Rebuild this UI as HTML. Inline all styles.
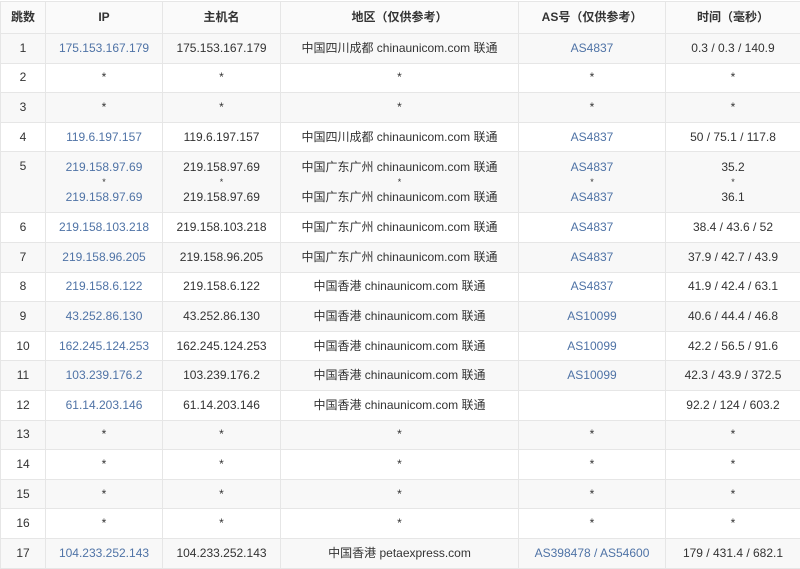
<!DOCTYPE html><html><head><meta charset="utf-8"><style>
body{margin:0;width:800px;height:568px;overflow:hidden;background:#fff;font-family:"Liberation Sans","Noto Sans CJK SC",sans-serif;font-size:12px;color:#333}
table{border-collapse:collapse;table-layout:fixed;width:800px;margin-top:1px}
td,th{border:1px solid #e6e6e6;text-align:center;padding:0;height:28.6px;line-height:15px;white-space:nowrap}
th{font-weight:bold;height:31px;background:#fafafa}
tr:nth-child(even) td{background:#f8f8f8}
tr.t td{height:61px;box-sizing:border-box}
.l{color:#4f73a6}
.s{font-size:9px;line-height:15.5px;display:block}
</style></head><body><table>
<colgroup><col style="width:45px"><col style="width:117px"><col style="width:118px"><col style="width:238px"><col style="width:147px"><col style="width:135px"></colgroup>
<tr><th>跳数</th><th>IP</th><th>主机名</th><th>地区（仅供参考）</th><th>AS号（仅供参考）</th><th>时间（毫秒）</th></tr>
<tr><td>1</td><td class="l">175.153.167.179</td><td>175.153.167.179</td><td>中国四川成都 chinaunicom.com 联通</td><td class="l">AS4837</td><td>0.3 / 0.3 / 140.9</td></tr>
<tr><td>2</td><td>*</td><td>*</td><td>*</td><td>*</td><td>*</td></tr>
<tr><td>3</td><td>*</td><td>*</td><td>*</td><td>*</td><td>*</td></tr>
<tr><td>4</td><td class="l">119.6.197.157</td><td>119.6.197.157</td><td>中国四川成都 chinaunicom.com 联通</td><td class="l">AS4837</td><td>50 / 75.1 / 117.8</td></tr>
<tr class="t"><td style="vertical-align:top;padding-top:7px">5</td><td class="l">219.158.97.69<span class="s" style="color:#333">*</span>219.158.97.69</td><td>219.158.97.69<span class="s">*</span>219.158.97.69</td><td>中国广东广州 chinaunicom.com 联通<span class="s">*</span>中国广东广州 chinaunicom.com 联通</td><td class="l">AS4837<span class="s" style="color:#333">*</span>AS4837</td><td>35.2<span class="s">*</span>36.1</td></tr>
<tr><td>6</td><td class="l">219.158.103.218</td><td>219.158.103.218</td><td>中国广东广州 chinaunicom.com 联通</td><td class="l">AS4837</td><td>38.4 / 43.6 / 52</td></tr>
<tr><td>7</td><td class="l">219.158.96.205</td><td>219.158.96.205</td><td>中国广东广州 chinaunicom.com 联通</td><td class="l">AS4837</td><td>37.9 / 42.7 / 43.9</td></tr>
<tr><td>8</td><td class="l">219.158.6.122</td><td>219.158.6.122</td><td>中国香港 chinaunicom.com 联通</td><td class="l">AS4837</td><td>41.9 / 42.4 / 63.1</td></tr>
<tr><td>9</td><td class="l">43.252.86.130</td><td>43.252.86.130</td><td>中国香港 chinaunicom.com 联通</td><td class="l">AS10099</td><td>40.6 / 44.4 / 46.8</td></tr>
<tr><td>10</td><td class="l">162.245.124.253</td><td>162.245.124.253</td><td>中国香港 chinaunicom.com 联通</td><td class="l">AS10099</td><td>42.2 / 56.5 / 91.6</td></tr>
<tr><td>11</td><td class="l">103.239.176.2</td><td>103.239.176.2</td><td>中国香港 chinaunicom.com 联通</td><td class="l">AS10099</td><td>42.3 / 43.9 / 372.5</td></tr>
<tr><td>12</td><td class="l">61.14.203.146</td><td>61.14.203.146</td><td>中国香港 chinaunicom.com 联通</td><td></td><td>92.2 / 124 / 603.2</td></tr>
<tr><td>13</td><td>*</td><td>*</td><td>*</td><td>*</td><td>*</td></tr>
<tr><td>14</td><td>*</td><td>*</td><td>*</td><td>*</td><td>*</td></tr>
<tr><td>15</td><td>*</td><td>*</td><td>*</td><td>*</td><td>*</td></tr>
<tr><td>16</td><td>*</td><td>*</td><td>*</td><td>*</td><td>*</td></tr>
<tr><td>17</td><td class="l">104.233.252.143</td><td>104.233.252.143</td><td>中国香港 petaexpress.com</td><td class="l">AS398478 / AS54600</td><td>179 / 431.4 / 682.1</td></tr>
</table></body></html>
